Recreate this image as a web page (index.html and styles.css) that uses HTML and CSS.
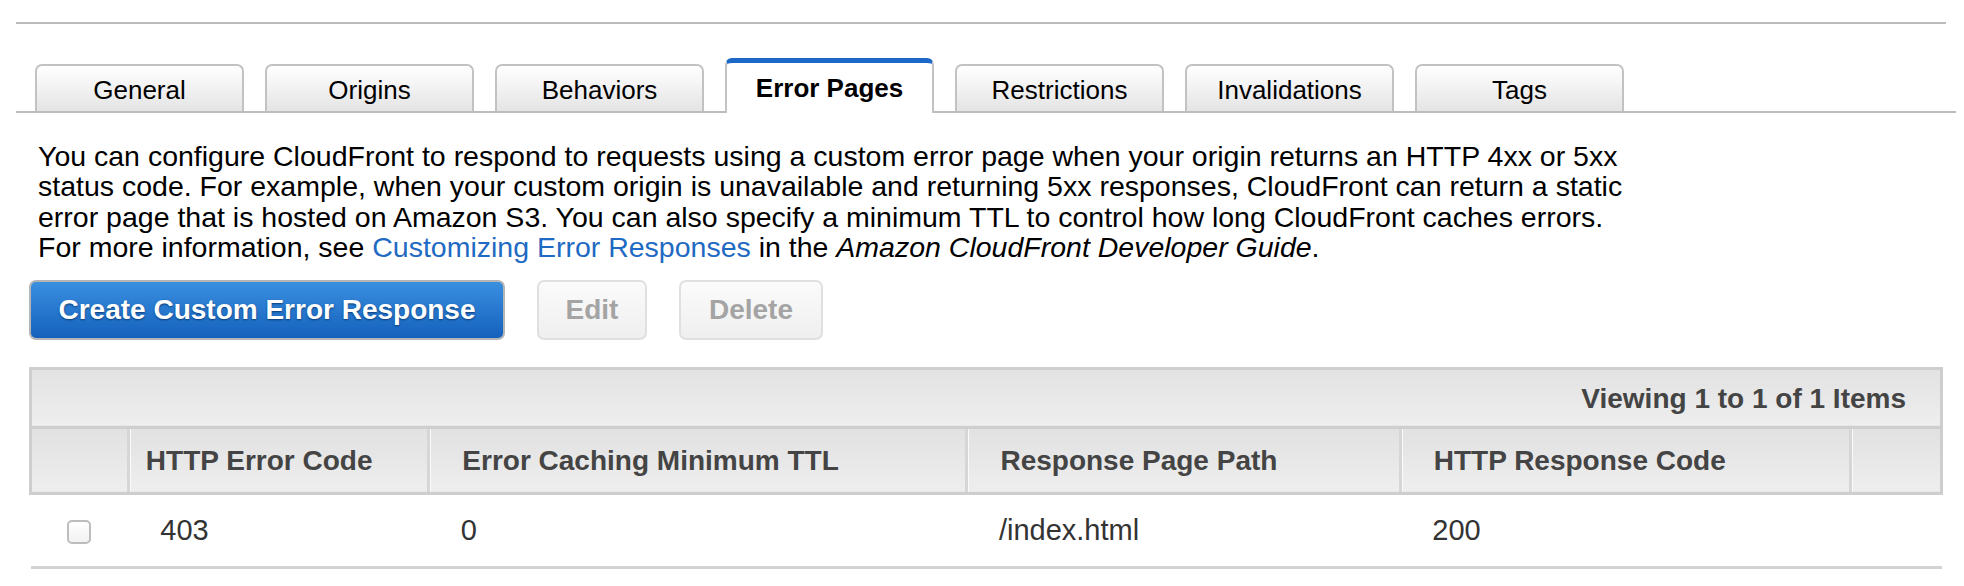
FILE: index.html
```html
<!DOCTYPE html>
<html>
<head>
<meta charset="utf-8">
<link rel="stylesheet" href="styles.css">
</head>
<body>
<div class="page">
  <div class="topline"></div>
  <div class="tabs">
    <div class="tab">General</div>
    <div class="tab">Origins</div>
    <div class="tab">Behaviors</div>
    <div class="tab active">Error Pages</div>
    <div class="tab">Restrictions</div>
    <div class="tab">Invalidations</div>
    <div class="tab">Tags</div>
  </div>
  <div class="content">
    <p class="desc">You can configure CloudFront to respond to requests using a custom error page when your origin returns an HTTP 4xx or 5xx<br>status code. For example, when your custom origin is unavailable and returning 5xx responses, CloudFront can return a static<br>error page that is hosted on Amazon S3. You can also specify a minimum TTL to control how long CloudFront caches errors.<br>For more information, see <a class="link" href="#">Customizing Error Responses</a> in the <em>Amazon CloudFront Developer Guide</em>.</p>
    <div class="actions">
      <button class="btn primary">Create Custom Error Response</button>
      <button class="btn disabled">Edit</button>
      <button class="btn disabled">Delete</button>
    </div>
    <table class="grid">
      <thead>
        <tr class="pager"><th colspan="6">Viewing 1 to 1 of 1 Items</th></tr>
        <tr class="cols">
          <th class="c-check"></th>
          <th class="c-code first">HTTP Error Code</th>
          <th class="c-ttl">Error Caching Minimum TTL</th>
          <th class="c-path">Response Page Path</th>
          <th class="c-resp">HTTP Response Code</th>
          <th class="c-end"></th>
        </tr>
      </thead>
      <tbody>
        <tr class="row">
          <td class="c-check"><span class="checkbox"></span></td>
          <td class="c-code">403</td>
          <td class="c-ttl">0</td>
          <td class="c-path">/index.html</td>
          <td class="c-resp">200</td>
          <td class="c-end"></td>
        </tr>
      </tbody>
    </table>
  </div>
</div>
</body>
</html>
```

FILE: styles.css
```css
* { box-sizing: border-box; }
html, body { margin: 0; padding: 0; background: #fff; }
body { font-family: "Liberation Sans", Arial, Helvetica, sans-serif; color: #000; }
.page { padding-top: 22px; width: 1964px; }
.topline { margin-left: 16px; width: 1930px; height: 2px; background: #bcbcbc; }

.tabs {
  margin-top: 34px;
  margin-left: 16px;
  width: 1940px;
  height: 55px;
  padding-left: 19px;
  display: flex;
  align-items: flex-end;
  gap: 21px;
  border-bottom: 2px solid #bcbcbc;
}
.tab {
  width: 209px;
  height: 47px;
  border: 2px solid #c2c2c2;
  border-bottom: none;
  border-radius: 7px 7px 0 0;
  background: linear-gradient(#ffffff, #e4e4e4);
  font-size: 26px;
  display: flex;
  align-items: center;
  justify-content: center;
  padding-top: 4px;
}
.tab.active {
  height: 55px;
  margin-bottom: -2px;
  background: #fff;
  border-top: 5px solid #1c68c8;
  font-weight: bold;
  padding-top: 0;
}

.content { padding-left: 29px; width: 1943px; }
.desc {
  margin: 28px 0 0 9px;
  font-size: 28.5px;
  line-height: 30.4px;
}
.link { color: #1f6ac3; text-decoration: none; }
.desc em { font-style: italic; }

.actions { display: flex; gap: 32px; margin-top: 17px; }
.btn {
  height: 60px;
  font-family: "Liberation Sans", Arial, sans-serif;
  font-size: 28px;
  font-weight: bold;
  border-radius: 7px;
  padding: 0;
}
.btn.primary {
  width: 476px;
  color: #fff;
  background: linear-gradient(#3a8fe0, #1461bc);
  border: 2px solid #b5b5b5;
  text-shadow: 0 1px 2px #0b3a72;
}
.btn.disabled {
  color: #a4a4a4;
  background: linear-gradient(#fbfbfb, #efefef);
  border: 2px solid #e0e0e0;
}
.btn.disabled:nth-child(2) { width: 110px; }
.btn.disabled:nth-child(3) { width: 144px; }

.grid {
  margin-top: 27px;
  width: 1914px;
  border-collapse: collapse;
  font-size: 28px;
}
.grid th { font-weight: bold; color: #444; text-align: left; }
.pager th {
  height: 59px;
  background: linear-gradient(#e2e2e2, #eeeeee);
  border: 3px solid #cecece;
  text-align: right;
  padding: 2px 34px 0 0;
}
.cols th {
  height: 66px;
  background: linear-gradient(#e1e1e1, #eeeeee);
  border-top: 3px solid #cecece;
  border-bottom: 3px solid #cecece;
  border-left: 3px solid #d6d6d6;
  padding: 2px 0 0 32px;
  box-shadow: inset 1px 0 0 #fafafa;
}
.cols th.c-check { border-left: 3px solid #cecece; box-shadow: none; }
.cols th.c-end { border-right: 3px solid #cecece; }
.cols th.first { padding-left: 16px; }
.c-check { width: 98px; }
.c-code { width: 301px; }
.c-ttl { width: 539px; }
.c-path { width: 434px; }
.c-resp { width: 451px; }
.c-end { width: 91px; }
.row td {
  height: 74px;
  font-size: 29px;
  color: #333;
  padding: 0 0 0 32px;
  border-bottom: 3px solid #d2d2d2;
}
.row td.c-check { padding: 0; text-align: center; }
.checkbox {
  display: inline-block;
  width: 24px;
  height: 24px;
  border: 2px solid #bdbdbd;
  border-radius: 5px;
  background: linear-gradient(#fff, #f2f2f2);
  vertical-align: middle;
}
```
